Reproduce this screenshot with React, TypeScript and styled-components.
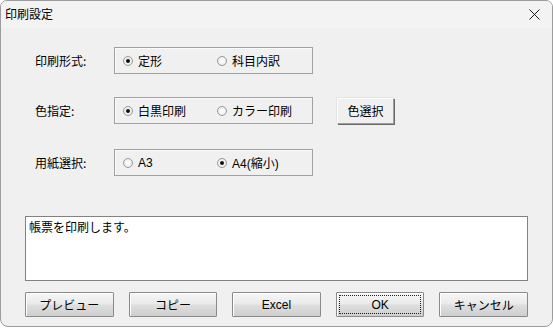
import React from "react";
import styled, { createGlobalStyle } from "styled-components";

const Global = createGlobalStyle`
  html, body { margin: 0; padding: 0; background: #ffffff; }
  body { font-family: "Liberation Sans", "Noto Sans CJK JP", sans-serif; font-size: 12px; color: #000; }
`;

const Win = styled.div`
  width: 553px;
  height: 327px;
  box-sizing: border-box;
  border: 1px solid #9c9c9c;
  border-radius: 7px 7px 8px 8px;
  background: #f0f0f0;
  display: flex;
  flex-direction: column;
  overflow: hidden;
`;

const TitleBar = styled.div`
  height: 27px;
  flex: none;
  display: flex;
  align-items: center;
  justify-content: space-between;
  padding: 0 6px 0 4px;
  background: #f3f3f3;
  font-family: "Noto Sans CJK JP", sans-serif;
  font-size: 12px;
  line-height: 1;
`;

const Title = styled.span`
  margin-top: -1px;
`;

const Close = styled.span`
  width: 24px;
  height: 20px;
  display: flex;
  align-items: center;
  justify-content: center;
`;

const Body = styled.div`
  flex: 1;
  display: flex;
  flex-direction: column;
  padding: 19px 24px 0 24px;
`;

const Row = styled.div<{ $gap: number }>`
  display: flex;
  align-items: center;
  height: 27px;
  margin-bottom: ${(p) => p.$gap}px;
`;

const Label = styled.div`
  width: 89px;
  padding-left: 10px;
  box-sizing: border-box;
  font-family: "Noto Sans CJK JP", sans-serif;
  font-size: 12px;
  flex: none;
`;

const Group = styled.div`
  width: 199px;
  height: 27px;
  box-sizing: border-box;
  border: 1px solid #a0a0a0;
  box-shadow: inset 1px 1px 0 #fbfbfb;
  display: flex;
  align-items: center;
  padding-left: 8px;
  flex: none;
`;

const Option = styled.div`
  width: 94px;
  display: flex;
  align-items: center;
  gap: 5px;
  font-family: "Liberation Sans", "Noto Sans CJK JP", sans-serif;
  font-size: 12px;
`;

const RadioDot = styled.span<{ $on: boolean }>`
  width: 10px;
  height: 10px;
  box-sizing: border-box;
  border-radius: 50%;
  border: 1px solid #9a9a9a;
  background: radial-gradient(circle at 50% 50%, #ffffff 0%, #f2f2f2 55%, #d6d6d6 100%);
  position: relative;
  flex: none;
  &::after {
    content: "";
    display: ${(p) => (p.$on ? "block" : "none")};
    position: absolute;
    left: 2px;
    top: 2px;
    width: 4px;
    height: 4px;
    border-radius: 50%;
    background: #111;
  }
`;

const FlatButton = styled.div`
  margin-left: 24px;
  width: 57px;
  height: 26px;
  box-sizing: border-box;
  display: flex;
  align-items: center;
  justify-content: center;
  background: #f0f0f0;
  border-top: 1px solid #ffffff;
  border-left: 1px solid #ffffff;
  border-right: 1px solid #a0a0a0;
  border-bottom: 1px solid #a0a0a0;
  box-shadow: 1px 1px 0 #696969, -1px -1px 0 #e3e3e3;
  font-family: "Noto Sans CJK JP", sans-serif;
  font-size: 12px;
`;

const Memo = styled.div`
  margin-top: 40px;
  width: 503px;
  height: 65px;
  box-sizing: border-box;
  background: #ffffff;
  border: 1px solid #828282;
  padding: 1px 3px;
  font-family: "Noto Sans CJK JP", sans-serif;
  font-size: 12px;
`;

const ButtonBar = styled.div`
  margin-top: 11px;
  display: flex;
  gap: 15px;
`;

const PushButton = styled.div<{ $focus?: boolean }>`
  width: 89px;
  height: 25px;
  box-sizing: border-box;
  border: 1px solid #8a8a8a;
  border-radius: 1px;
  background: linear-gradient(#f6f6f6 0%, #ebebeb 45%, #dddddd 55%, #cfcfcf 100%);
  box-shadow: inset 1px 1px 0 #ffffff;
  display: flex;
  align-items: center;
  justify-content: center;
  position: relative;
  font-family: "Liberation Sans", "Noto Sans CJK JP", sans-serif;
  font-size: 12px;
  &::after {
    content: "";
    display: ${(p) => (p.$focus ? "block" : "none")};
    position: absolute;
    inset: 2px;
    border: 1px dotted #222;
  }
`;

const options: [string, string[], number][] = [
  ["印刷形式:", ["定形", "科目内訳"], 0],
  ["色指定:", ["白黒印刷", "カラー印刷"], 0],
  ["用紙選択:", ["A3", "A4(縮小)"], 1],
];

export default function App() {
  return (
    <>
      <Global />
      <Win>
        <TitleBar>
          <Title>印刷設定</Title>
          <Close>
            <svg width="11" height="11" viewBox="0 0 11 11">
              <path d="M0.5 0.5 L10.5 10.5 M10.5 0.5 L0.5 10.5" stroke="#1a1a1a" strokeWidth="1" />
            </svg>
          </Close>
        </TitleBar>
        <Body>
          {options.map(([label, opts, sel], i) => (
            <Row key={label} $gap={i === 0 ? 23 : i === 1 ? 25 : 0}>
              <Label>{label}</Label>
              <Group>
                {opts.map((o, j) => (
                  <Option key={o}>
                    <RadioDot $on={j === sel} />
                    {o}
                  </Option>
                ))}
              </Group>
              {i === 1 && <FlatButton>色選択</FlatButton>}
            </Row>
          ))}
          <Memo>帳票を印刷します。</Memo>
          <ButtonBar>
            <PushButton>プレビュー</PushButton>
            <PushButton>コピー</PushButton>
            <PushButton>Excel</PushButton>
            <PushButton $focus>OK</PushButton>
            <PushButton>キャンセル</PushButton>
          </ButtonBar>
        </Body>
      </Win>
    </>
  );
}
